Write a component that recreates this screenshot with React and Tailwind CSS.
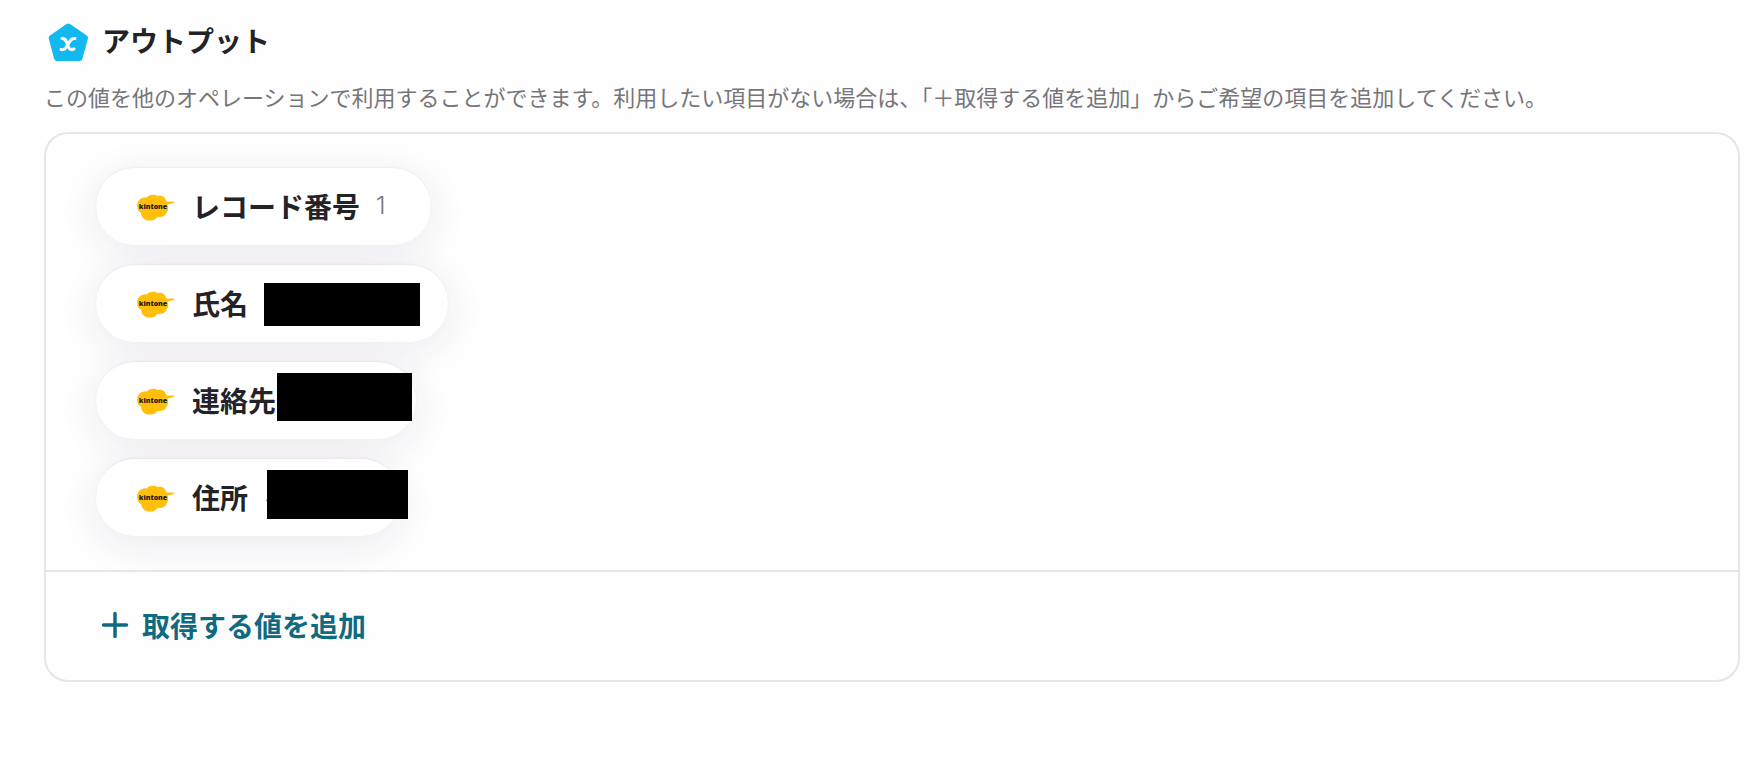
import clsx from 'clsx'

const outputs = [
    { id: 'record', label: 'レコード番号', value: '1', box: 'w-[15px] font-light' },
    { id: 'name', label: '氏名', value: '', box: 'w-36', mask: 'left-0 top-0 w-[156px] h-[43px]' },
    { id: 'contact', label: '連絡先', value: '', box: 'w-[84px]', mask: '-left-[15px] -top-[7px] w-[135px] h-12' },
    { id: 'address', label: '住所', value: 'ネ', box: 'w-24', mask: 'left-[3px] -top-[7px] w-[141px] h-[49px]' },
]

const OutputLogo = () => (
    <svg className="size-12" viewBox="0 0 48 48" aria-hidden="true">
        <path
            d="M24.300 8.500 L41 20 L35.500 40 H13 L7.700 20 Z"
            fill="#12b8f0"
            stroke="#12b8f0"
            strokeWidth="6"
            strokeLinejoin="round"
        />
        <g fill="none" stroke="#fff" strokeWidth="3" strokeLinecap="round" strokeLinejoin="round">
            <path d="M18 20.500 C21.500 20.300 22.300 23 23.500 26.500 C24.700 30 25.500 32.500 30 31" />
            <path d="M31 20.500 C27.500 20 26 22.500 23.800 26.500 C21.500 30.500 20.500 32.500 17 31.500" />
        </g>
    </svg>
)

const KintoneLogo = () => (
    <svg className="w-10 h-8 shrink-0" viewBox="0 0 40 32" aria-hidden="true">
        <path
            d="M11 7.500 C12.500 4.500 18.500 4 21.500 6 C25.500 5 29.500 7 30.500 11.500 C33 12 35 11 39 12 C37.500 13.500 34 14 31.500 14.500 C33 18 32 20.500 30.500 22.500 C29.500 26.500 25 27.500 21.500 27 C18.500 31 14.500 30.500 12 30.500 C8.500 30 5 27 5.200 23 C2 21.500 1 18.500 1.200 15 C1.200 10.500 6 6.500 11 7.500 Z"
            fill="#ffbf0a"
        />
        <text x="17" y="19" textAnchor="middle" fontSize="7" fontWeight="800" fontFamily="Open Sans, sans-serif" fill="#221c10">kintone</text>
    </svg>
)

const OutputChip = ({ item }) => (
    <li className="flex items-center gap-4 h-[77px] px-10 pb-px rounded-full bg-white shadow-[0_-1px_2px_rgba(35,24,50,0.05),0_8px_40px_rgba(60,24,80,0.09)]">
        <KintoneLogo />
        <span className="text-[28px] leading-10 font-bold whitespace-nowrap">{item.label}</span>
        <span className={clsx("relative flex items-center h-10 text-2xl font-['Inter','Noto_Sans_CJK_JP',sans-serif] text-[#77757a]", item.box)}>
            {item.value}
            {item.mask && <span className={clsx('absolute bg-black', item.mask)} />}
        </span>
    </li>
)

const App = () => {
    return (
        <main
            lang="ja"
            className="min-h-screen bg-[#fefefe] pt-[18px] pl-11 pr-5 text-[#232227] font-['Noto_Sans_CJK_JP',sans-serif]"
        >
            <header className="flex items-start gap-[10px]">
                <OutputLogo />
                <h1 className="text-[28px] leading-[44px] font-bold">アウトプット</h1>
            </header>
            <p className="mt-[14px] text-[22px] leading-8 text-[#77757a]">
                この値を他のオペレーションで利用することができます。利用したい項目がない場合は、「＋取得する値を追加」からご希望の項目を追加してください。
            </p>

            <section className="mt-5 rounded-3xl border-2 border-[#e6e5e7]">
                <ul className="flex flex-col items-start gap-5 pl-[50px] pt-[34px] pb-[34px]">
                    {outputs.map((item) => (
                        <OutputChip key={item.id} item={item} />
                    ))}
                </ul>
                <div className="border-t-2 border-[#e6e5e7] px-[53px] pt-[33px] pb-[35px]">
                    <button type="button" className="flex items-center gap-[11px] h-10 text-[28px] leading-10 font-bold text-[#0f6a80]">
                        <svg className="size-8" viewBox="0 0 32 32" fill="none" stroke="currentColor" strokeWidth="3.500" strokeLinecap="round" aria-hidden="true">
                            <path d="M16 4.500v23M4.500 16h23" />
                        </svg>
                        取得する値を追加
                    </button>
                </div>
            </section>
        </main>
    )
}

export default App
